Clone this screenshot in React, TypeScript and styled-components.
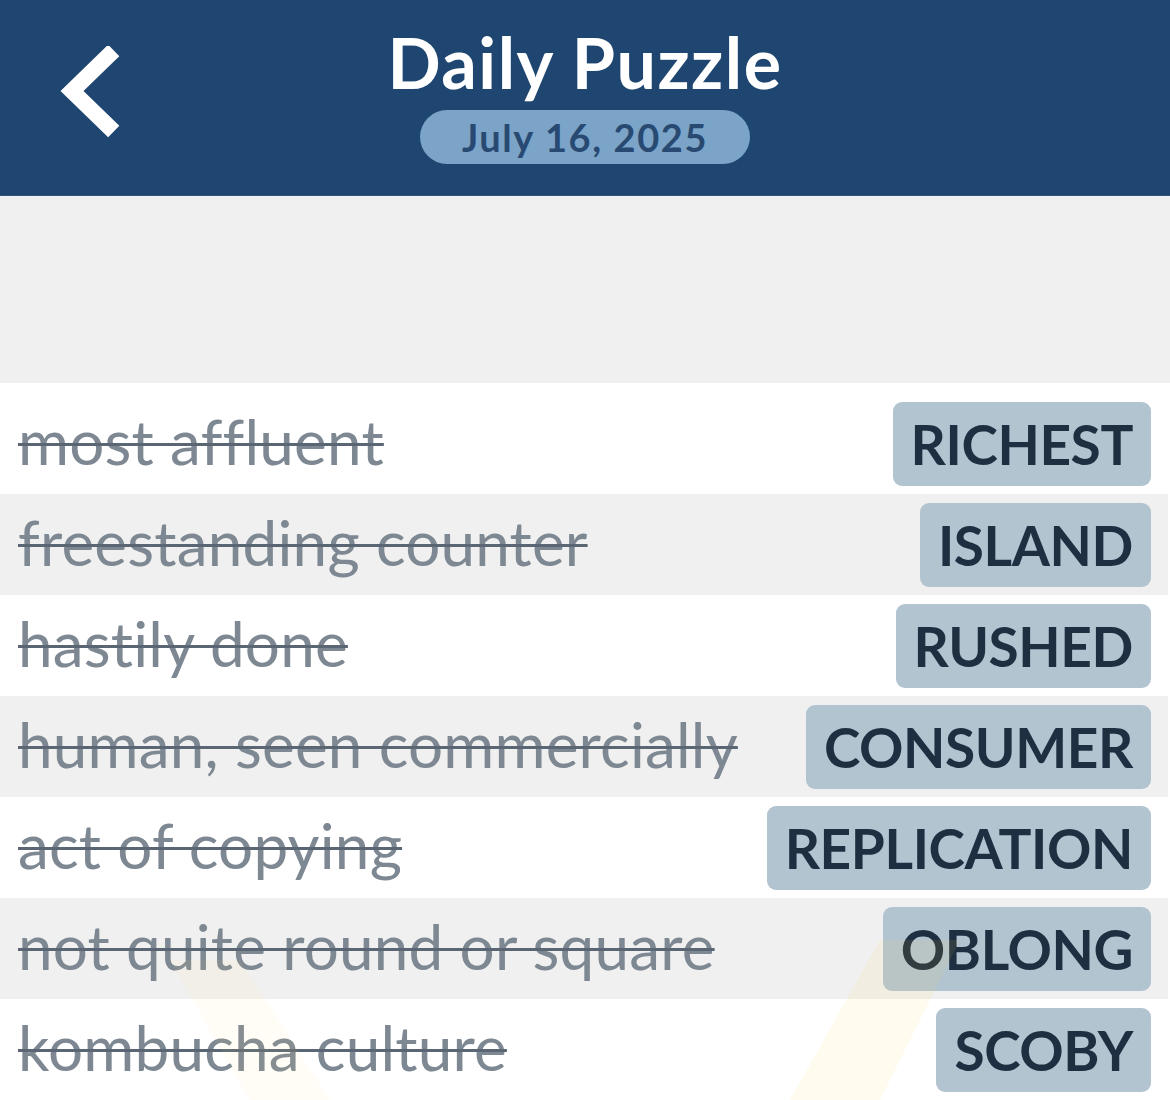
import React from "react";
import styled, { createGlobalStyle } from "styled-components";

const Global = createGlobalStyle`
  html, body { margin: 0; padding: 0; background: #ffffff; }
  body { font-family: "Lato", "Noto Sans", sans-serif; width: 1170px; overflow: hidden; }
  * { box-sizing: border-box; }
`;

const Page = styled.div`
  position: relative;
  width: 1170px;
  height: 1100px;
  overflow: hidden;
  background: #ffffff;
`;

const Header = styled.header`
  height: 196px;
  background: #1f4670;
  display: grid;
  grid-template-columns: 1fr auto 1fr;
  align-items: start;
  border-bottom: 1px solid #2c5580;
`;

const BackButton = styled.button`
  justify-self: start;
  margin: 46px 0 0 58px;
  padding: 0;
  border: 0;
  background: none;
  width: 62px;
  height: 92px;
  display: flex;
`;

const TitleBlock = styled.div`
  display: flex;
  flex-direction: column;
  align-items: center;
  padding-top: 22px;
`;

const Title = styled.h1`
  margin: 0;
  color: #ffffff;
  font-family: "Lato", sans-serif;
  font-weight: 700;
  font-size: 70px;
  line-height: 80px;
  letter-spacing: 1.5px;
`;

const DatePill = styled.div`
  margin-top: 8px;
  width: 330px;
  height: 54px;
  border-radius: 27px;
  background: #7ba4c8;
  color: #284a72;
  font-family: "Lato", sans-serif;
  font-weight: 700;
  font-size: 38px;
  display: flex;
  align-items: center;
  justify-content: center;
  letter-spacing: 1.6px;
`;

const Spacer = styled.div`
  height: 187px;
  background: #f0f0f0;
`;

const List = styled.ul`
  list-style: none;
  margin: 0;
  padding: 10px 0 0 0;
  background: #ffffff;
`;

const Row = styled.li<{ $alt: boolean }>`
  height: 101px;
  width: 1168px;
  background: ${(p) => (p.$alt ? "#f0f0f0" : "#ffffff")};
  display: flex;
  align-items: center;
  justify-content: space-between;
  padding: 0 18px 0 18px;
`;

const Clue = styled.span`
  font-family: "Lato", sans-serif;
  font-size: 62px;
  color: #7e8893;
  text-decoration: line-through;
  text-decoration-color: #5a6673;
  text-decoration-thickness: 3px;
  white-space: nowrap;
  letter-spacing: 0.2px;
  margin-top: -6px;
`;

const Answer = styled.span`
  height: 84px;
  padding: 0 18px;
  border-radius: 9px;
  background: #b2c4d0;
  color: #1d2f40;
  font-family: "Lato", sans-serif;
  font-weight: 700;
  font-size: 55px;
  display: flex;
  align-items: center;
  margin-right: -1px;
  letter-spacing: -0.4px;
`;

const Rays = styled.svg`
  position: absolute;
  left: 0;
  bottom: 0;
  width: 1170px;
  height: 160px;
  pointer-events: none;
`;

const rows: [string, string][] = [
  ["most affluent", "RICHEST"],
  ["freestanding counter", "ISLAND"],
  ["hastily done", "RUSHED"],
  ["human, seen commercially", "CONSUMER"],
  ["act of copying", "REPLICATION"],
  ["not quite round or square", "OBLONG"],
  ["kombucha culture", "SCOBY"],
];

export default function App() {
  return (
    <Page>
      <Global />
      <Header>
        <BackButton aria-label="Back">
          <svg width="62" height="92" viewBox="0 0 62 92">
            <polyline
              points="50,10 14,45 50,80"
              fill="none"
              stroke="#ffffff"
              strokeWidth="16"
              strokeLinejoin="miter"
              strokeLinecap="square"
            />
          </svg>
        </BackButton>
        <TitleBlock>
          <Title>Daily Puzzle</Title>
          <DatePill>July 16, 2025</DatePill>
        </TitleBlock>
        <div />
      </Header>
      <Spacer />
      <List>
        {rows.map(([clue, answer], i) => (
          <Row key={answer} $alt={i % 2 === 1}>
            <Clue>{clue}</Clue>
            <Answer>{answer}</Answer>
          </Row>
        ))}
      </List>
      <Rays viewBox="0 0 1170 160">
        <polygon points="170,20 240,20 330,160 250,160" fill="#ffe680" opacity="0.07" />
        <polygon points="880,0 960,0 880,160 790,160" fill="#ffd84a" opacity="0.09" />
      </Rays>
    </Page>
  );
}
